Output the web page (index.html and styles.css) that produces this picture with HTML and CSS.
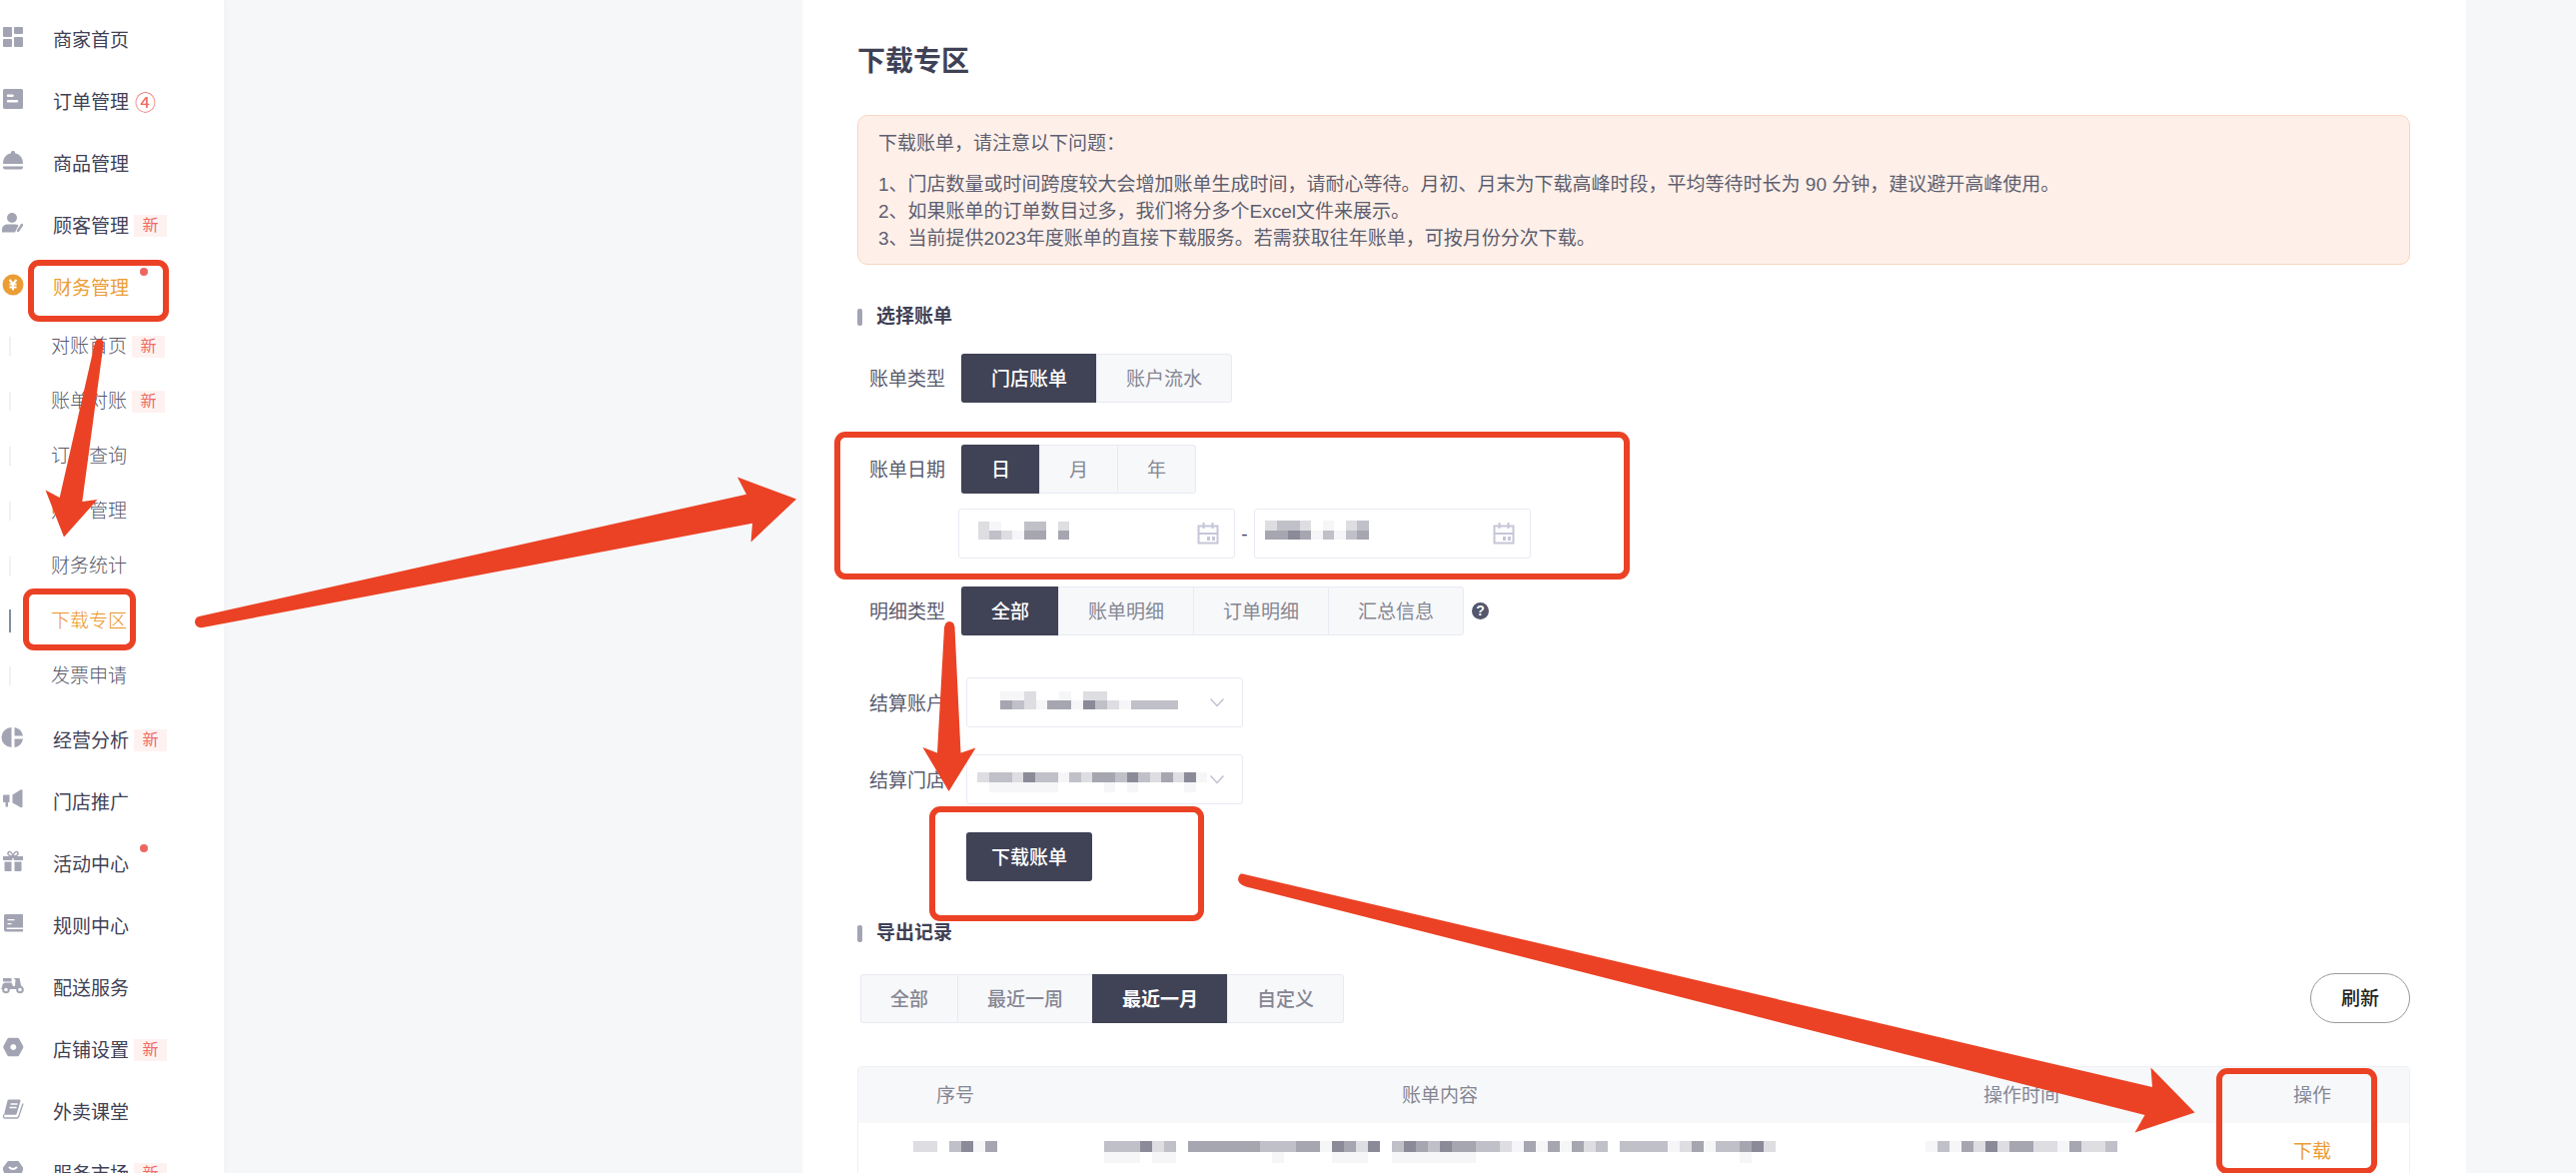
FILE: index.html
```html
<!DOCTYPE html>
<html lang="zh-CN">
<head>
<meta charset="utf-8">
<meta name="viewport" content="width=device-width, initial-scale=1">
<title>下载专区</title>
<link rel="stylesheet" href="styles.css">
</head>
<body>
<div class="app">
  <nav class="sidebar">
    <ul class="menu">
      <li><a href="#" class="menu-item"><svg class="icon" viewBox="0 0 20 20"><rect x="0" y="0" width="9" height="10" rx="1"/><rect x="11" y="0" width="9" height="7" rx="1"/><rect x="0" y="12" width="9" height="8" rx="1"/><rect x="11" y="10" width="9" height="10" rx="1"/></svg><span>商家首页</span></a></li>
      <li><a href="#" class="menu-item"><svg class="icon" viewBox="0 0 20 20"><path fill-rule="evenodd" d="M1.500 0h17A1.500 1.500 0 0 1 20 1.500v17a1.500 1.500 0 0 1-1.500 1.500h-17A1.500 1.500 0 0 1 0 18.500v-17A1.500 1.500 0 0 1 1.500 0zM5 5.500a1 1 0 0 0 0 2.500h4.500a1 1 0 0 0 0-2.500zM5 11a1 1 0 0 0 0 2.500h9a1 1 0 0 0 0-2.500z"/></svg><span>订单管理</span><span class="count">④</span></a></li>
      <li><a href="#" class="menu-item"><svg class="icon" viewBox="0 0 20 20"><path d="M8 2.200V1.500A1.500 1.500 0 0 1 9.500 0h1A1.500 1.500 0 0 1 12 1.500v.7A10 10 0 0 1 20 13H0A10 10 0 0 1 8 2.200z"/><path d="M0 15.500h20v1a2 2 0 0 1-2 2H2a2 2 0 0 1-2-2z"/></svg><span>商品管理</span></a></li>
      <li><a href="#" class="menu-item"><svg class="icon" viewBox="0 0 20 20"><circle cx="9" cy="5" r="5"/><path d="M-1 19.500v-2.500q0-5.500 6-5.500h7q2 0 3.500 1l-3.500 7z"/><path d="M19 12l-4 6" fill="none" stroke="#a3a4b3" stroke-width="2.400" stroke-linecap="round"/></svg><span>顾客管理</span><span class="tag">新</span></a></li>
      <li><a href="#" class="menu-item current"><svg class="icon" viewBox="0 0 20 20"><circle cx="10" cy="10" r="10.500"/><path d="M6.500 5l3.500 4 3.500-4M10 9v6.500M6.500 9.500h7M6.500 12.500h7" fill="none" stroke="#fff" stroke-width="1.900"/></svg><span>财务管理</span><i class="dot"></i></a>
        <ul class="submenu">
          <li><a href="#" class="sub-item"><span>对账首页</span><span class="tag">新</span></a></li>
          <li><a href="#" class="sub-item"><span>账单对账</span><span class="tag">新</span></a></li>
          <li><a href="#" class="sub-item"><span>订单查询</span></a></li>
          <li><a href="#" class="sub-item"><span>账户管理</span></a></li>
          <li><a href="#" class="sub-item"><span>财务统计</span></a></li>
          <li><a href="#" class="sub-item active"><span>下载专区</span></a></li>
          <li><a href="#" class="sub-item"><span>发票申请</span></a></li>
        </ul>
      </li>
      <li><a href="#" class="menu-item"><svg class="icon" viewBox="0 0 20 20"><path d="M8.500 0v20A10 10 0 0 1 8.500 0zM11.500 0A10 10 0 0 1 20 8.500h-8.500zM11.500 11.500H20A10 10 0 0 1 11.500 20z"/></svg><span>经营分析</span><span class="tag">新</span></a></li>
      <li><a href="#" class="menu-item"><svg class="icon" viewBox="0 0 20 20"><path d="M1 5.500h5.500V13H5v4.500H2.500V13H1q-1 0-1-1V6.500q0-1 1-1zM9.500 5.500L17.500.5q2-.8 2 .8v16q0 1.600-2 .7l-8-4.500z"/></svg><span>门店推广</span></a></li>
      <li><a href="#" class="menu-item"><svg class="icon" viewBox="0 0 20 20"><path d="M0 5h20v4H0zM1.500 10.500h7V20h-6q-1 0-1-1zM11.500 10.500h7V19q0 1-1 1h-6z"/><path d="M10 5Q4 4.500 5 1.500 7-1.500 10 4q3-5.500 5-2.500 1 3-5 3.500z" fill="none" stroke="#a3a4b3" stroke-width="1.500"/><path d="M9.300 7h1.400v13H9.300z" fill="#fff"/></svg><span>活动中心</span><i class="dot"></i></a></li>
      <li><a href="#" class="menu-item"><svg class="icon" viewBox="0 0 20 20"><path fill-rule="evenodd" d="M2.500 1H20v13.500H4q-1.200.8 0 1.500h16v2.500H3q-2 0-2-2v-14Q1 1 2.500 1zM4.500 6v1.300h7V6zM4.500 10v1.300h4V10z"/></svg><span>规则中心</span></a></li>
      <li><a href="#" class="menu-item"><svg class="icon" viewBox="0 0 20 20"><path d="M0 3h8.500v3.500H0zM-1 12q0-4.500 4-4.500h5.500l1.500 3.500h2l.5-6.500-2-1.500h6l1.500 7 2 4h-22z"/><circle cx="3" cy="14.500" r="2.800" fill="#fff" stroke="#a3a4b3" stroke-width="2"/><circle cx="17" cy="14.500" r="2.800" fill="#fff" stroke="#a3a4b3" stroke-width="2"/></svg><span>配送服务</span></a></li>
      <li><a href="#" class="menu-item"><svg class="icon" viewBox="0 0 20 20"><path fill-rule="evenodd" d="M6 .8h8.500q1 0 1.500.8l4.200 7.400q.4.900 0 1.800L16 18.400q-.5.800-1.500.8H6q-1 0-1.500-.8L.4 10.800q-.4-.9 0-1.800l4.100-7.400Q5 .8 6 .8zM10.300 7a3 3 0 1 0 .01 0z"/></svg><span>店铺设置</span><span class="tag">新</span></a></li>
      <li><a href="#" class="menu-item"><svg class="icon" viewBox="0 0 20 20"><path d="M6 .5h10.500q1.500 0 1 1.600L13.800 14.500q-.4 1.200-1.600 1.200H1L4.500 1.600Q4.900.5 6 .5z"/><path d="M1 15.500Q-.5 19 2 19h11.500q1.700 0 2.200-1.500L20 4.500" fill="none" stroke="#a3a4b3" stroke-width="1.300"/><path d="M7.500 5h7M6.500 8.500h7" stroke="#fff" stroke-width="1.300"/></svg><span>外卖课堂</span></a></li>
      <li><a href="#" class="menu-item"><svg class="icon" viewBox="0 0 20 20"><path d="M5 0h10.500L20 6.500V9l-4 10H4L0 9V6.500z"/><path d="M6 6q4 4 8 0" fill="none" stroke="#fff" stroke-width="1.800"/></svg><span>服务市场</span><span class="tag">新</span></a></li>
    </ul>
  </nav>

  <main class="panel">
    <h1>下载专区</h1>
    <div class="notice">
      <p>下载账单，请注意以下问题：</p>
      <ul>
        <li>1、门店数量或时间跨度较大会增加账单生成时间，请耐心等待。月初、月末为下载高峰时段，平均等待时长为 90 分钟，建议避开高峰使用。</li>
        <li>2、如果账单的订单数目过多，我们将分多个Excel文件来展示。</li>
        <li>3、当前提供2023年度账单的直接下载服务。若需获取往年账单，可按月份分次下载。</li>
      </ul>
    </div>

    <h2>选择账单</h2>
    <form class="filters">
      <div class="row">
        <span class="label" id="type-label">账单类型</span>
        <div class="segment" role="group" aria-labelledby="type-label">
          <button type="button" class="on">门店账单</button><button type="button">账户流水</button>
        </div>
      </div>
      <div class="row">
        <span class="label" id="date-label">账单日期</span>
        <div class="segment" role="group" aria-labelledby="date-label">
          <button type="button" class="on">日</button><button type="button">月</button><button type="button">年</button>
        </div>
      </div>
      <div class="row dates">
        <div class="field">
          <input type="text" aria-label="开始日期" readonly>
          <span class="masked masked-start" data-cells="21003302 23214404"></span>
          <svg class="calendar" viewBox="0 0 22 22"><path d="M1.500 3.500h19v17h-19zM1.500 11h19M6.500 0v6M15.500 0v6M9.500 3.500h3" /><path class="solid" d="M10 14h3v4h-3zM15 14h3v4h-3z"/></svg>
        </div>
        <span class="dash">-</span>
        <div class="field">
          <input type="text" aria-label="结束日期" readonly>
          <span class="masked masked-end" data-cells="233201023 445413134"></span>
          <svg class="calendar" viewBox="0 0 22 22"><path d="M1.500 3.500h19v17h-19zM1.500 11h19M6.500 0v6M15.500 0v6M9.500 3.500h3" /><path class="solid" d="M10 14h3v4h-3zM15 14h3v4h-3z"/></svg>
        </div>
      </div>
      <div class="row detail">
        <span class="label" id="detail-label">明细类型</span>
        <div class="segment" role="group" aria-labelledby="detail-label">
          <button type="button" class="on">全部</button><button type="button">账单明细</button><button type="button">订单明细</button><button type="button">汇总信息</button>
        </div>
        <button type="button" class="help" aria-label="说明">?</button>
      </div>
      <div class="row account">
        <label class="label" for="account">结算账户</label>
        <div class="field select">
          <select id="account"><option></option></select>
          <span class="masked masked-account" data-cells="112001022000000 432144153213333"></span>
          <svg class="chevron" viewBox="0 0 14 8"><path d="M.5.5l6.500 7 6.500-7"/></svg>
        </div>
      </div>
      <div class="row store">
        <label class="label" for="store">结算门店</label>
        <div class="field select">
          <select id="store"><option></option></select>
          <span class="masked masked-store" data-cells="23325331324435324251 01111110000101000010"></span>
          <svg class="chevron" viewBox="0 0 14 8"><path d="M.5.5l6.500 7 6.500-7"/></svg>
        </div>
      </div>
      <button type="button" class="primary">下载账单</button>
    </form>

    <h2 class="records-title">导出记录</h2>
    <div class="toolbar">
      <div class="segment strong" role="group" aria-label="导出时间">
        <button type="button">全部</button><button type="button">最近一周</button><button type="button" class="on">最近一月</button><button type="button">自定义</button>
      </div>
      <button type="button" class="refresh">刷新</button>
    </div>
    <table class="records">
      <thead>
        <tr><th class="narrow">序号</th><th class="wide">账单内容</th><th class="medium">操作时间</th><th class="narrow">操作</th></tr>
      </thead>
      <tbody>
        <tr>
          <td><span class="masked" data-cells="022035140 000000000"></span></td>
          <td><span class="masked" data-cells="33352304444443334415425035435443321414142303333124133452 11101100000000100001110011111110000000000000000000000100"></span></td>
          <td><span class="masked" data-cells="1314252442214223 0000000000000000"></span></td>
          <td><a href="#" class="download">下载</a></td>
        </tr>
      </tbody>
    </table>
  </main>

  <svg class="guide" viewBox="0 0 2578 1174" aria-hidden="true">
    <g class="frames">
      <rect x="31" y="263" width="135" height="56" rx="8"/>
      <rect x="26" y="592" width="107" height="56" rx="8"/>
      <rect x="838" y="435" width="790" height="142" rx="8"/>
      <rect x="933" y="810" width="269" height="109" rx="8"/>
      <rect x="2221" y="1072" width="155" height="100" rx="8"/>
    </g>
    <path d="M95 343Q96 339 100 339.500Q104 340 103.500 345L82.300 502L97.500 500L64 537.500L45.500 490.500L59.700 498z"/>
    <path d="M199 617L747 494.700L738 477.500L797 499.500L751.500 542.500L753 523.700L203 628Q196 629 195 623Q195 618 199 617z"/>
    <path d="M945 628Q946 622 950 622Q955 622 955.500 628L961.500 753.500L976.500 748.500L949.600 792L923.400 748L938 753.500z"/>
    <path d="M1243 874.500L2154 1088L2152.500 1068.500L2196.500 1113.500L2136.500 1133.500L2146.500 1116L1247 887.500Q1239 885 1239 880Q1240 874 1243 874.500z"/>
  </svg>
</div>
<script src="app.js"></script>
</body>
</html>
```
FILE: styles.css
```css
* { box-sizing: border-box; }

body {
  margin: 0;
  background: #f6f7f9;
  color: #3f4156;
  font-family: "Liberation Sans", "Noto Sans CJK SC", sans-serif;
  font-size: 19px;
  line-height: 27px;
}

h1, h2, p, ul { margin: 0; padding: 0; }
ul { list-style: none; }
a { color: inherit; text-decoration: none; }
button, input, select { font: inherit; margin: 0; }

.app {
  position: relative;
  display: flex;
  height: 100vh;
  overflow: hidden;
}

/* Sidebar */
.sidebar {
  flex: 0 0 224px;
  background: #fff;
  box-shadow: 0 0 8px rgba(63, 65, 86, 0.04);
}
.menu { padding-top: 9px; }
.menu-item {
  display: flex;
  align-items: center;
  height: 62px;
  padding-left: 3px;
  font-size: 19px;
}
.icon {
  width: 20px;
  height: 20px;
  margin: 0 30px 6px 0;
  overflow: visible;
  fill: #a3a4b3;
}
.current { color: #eb9d35; }
.current .icon { fill: #eb9d35; }
.count { margin-left: 6px; color: #ee6a63; font-size: 21px; }
.tag {
  width: 33px;
  margin-left: 5px;
  background: #fef2f1;
  color: #ee6a63;
  font-size: 16px;
  font-weight: 400;
  line-height: 22px;
  text-align: center;
}
.dot {
  width: 8px;
  height: 8px;
  margin: 0 0 32px 11px;
  border-radius: 50%;
  background: #ee6660;
}
.submenu { padding-bottom: 6px; }
.sub-item {
  display: flex;
  align-items: center;
  height: 55px;
  padding-left: 9px;
  color: #55576a;
  font-weight: 300;
}
.sub-item::before {
  content: "";
  width: 2px;
  height: 19px;
  margin-right: 40px;
  background: #f0f0f6;
}
.sub-item.active { color: #eb9425; }
.sub-item.active::before { height: 23px; background: #7f909c; }

/* Content panel */
.panel {
  flex: 1;
  min-width: 0;
  margin: 0 110px 0 579px;
  padding: 42px 56px 0 55px;
  background: #fff;
}
h1 { font-size: 28px; line-height: 40px; font-weight: 700; }
.notice {
  margin-top: 33px;
  padding: 14px 20px 12px;
  border: 1px solid #fad5bf;
  border-radius: 10px;
  background: #fef0e9;
  color: #5d5e70;
}
.notice ul { margin-top: 14px; }
h2 {
  display: flex;
  align-items: center;
  gap: 14px;
  margin-top: 38px;
  font-size: 19px;
  line-height: 28px;
  font-weight: 700;
}
h2::before {
  content: "";
  width: 5px;
  height: 17px;
  border-radius: 2px;
  background: #a3a4b3;
}

/* Filter form */
.filters { padding: 23px 0 0 12px; }
.row { display: flex; align-items: center; margin-bottom: 42px; }
.row:nth-child(2) { margin-bottom: 15px; }
.label { width: 92px; padding-top: 2px; color: #5a5b6e; }
.segment {
  display: flex;
  height: 49px;
}
.segment button {
  padding: 2px 29px 0;
  border: 1px solid #e9eaf2;
  border-right-width: 0;
  background: #f7f8fa;
  color: #858692;
}
.segment button:first-child { border-radius: 3px 0 0 3px; }
.segment button:last-child { border-right-width: 1px; border-radius: 0 3px 3px 0; }
.segment button.on { border-color: #404256; background: #404256; color: #fff; font-weight: 500; }
.segment.strong button { font-weight: 500; }
.segment.strong button.on { font-weight: 700; }

.row.dates { margin: 0 0 28px 89px; }
.dash { width: 19px; text-align: center; }
.field { position: relative; width: 277px; height: 50px; }
.field input, .field select {
  width: 100%;
  height: 100%;
  padding: 0 18px;
  border: 1px solid #e9eaf2;
  border-radius: 3px;
  background: #fff;
  appearance: none;
}
.select { margin-left: 5px; }
.row.account { margin-bottom: 27px; }
.row.store { margin-bottom: 28px; }
.calendar {
  position: absolute;
  top: 14px;
  right: 16px;
  width: 22px;
  height: 22px;
  fill: none;
  stroke: #c5c6d8;
  stroke-width: 2;
}
.calendar .solid { fill: #c5c6d8; stroke: none; }
.chevron {
  position: absolute;
  top: 21px;
  right: 19px;
  width: 14px;
  height: 8px;
  fill: none;
  stroke: #c0c1d3;
  stroke-width: 1.5;
  overflow: visible;
}
.help {
  width: 17px;
  height: 17px;
  margin-left: 8px;
  padding: 0;
  border: 0;
  border-radius: 50%;
  background: #54566b;
  color: #fff;
  font-size: 14px;
  font-weight: 700;
  line-height: 17px;
}
.primary {
  display: block;
  height: 49px;
  margin-left: 97px;
  padding: 2px 25px 0;
  border: 0;
  border-radius: 3px;
  background: #404256;
  color: #fff;
  font-weight: 500;
}

/* Export records */
.toolbar {
  display: flex;
  align-items: center;
  justify-content: space-between;
  margin: 26px 0 43px;
  padding-left: 3px;
}
.refresh {
  width: 100px;
  height: 50px;
  border: 1px solid #9a9a9e;
  border-radius: 25px;
  background: #fff;
  color: #222;
  font-weight: 500;
}
.records {
  width: 100%;
  border: 1px solid #eff0f4;
  border-radius: 4px;
  border-spacing: 0;
  table-layout: fixed;
  text-align: center;
}
.records th {
  height: 56px;
  padding: 0;
  background: #f7f8fa;
  color: #858692;
  font-weight: 400;
}
.records td { height: 56px; padding: 0; }
.narrow { width: 12.5%; }
.wide { width: 50%; }
.medium { width: 25%; }
.download { color: #eb9d35; }

/* Masked values */
.masked { display: inline-block; vertical-align: middle; line-height: 0; }
.masked svg { display: block; width: 100%; height: 100%; }
.field .masked { position: absolute; pointer-events: none; }
.masked-start { left: 20px; top: 13px; width: 91px; height: 18px; }
.masked-end { left: 11px; top: 12px; width: 104px; height: 19px; }
.masked-account { left: 34px; top: 14px; width: 178px; height: 18px; }
.masked-store { left: 11px; top: 18px; width: 230px; height: 20px; }
.level-1 { fill: #f6f6f8; }
.level-2 { fill: #dddde2; }
.level-3 { fill: #c0c0c8; }
.level-4 { fill: #a6a6b1; }
.level-5 { fill: #8a8a99; }

/* Walkthrough marks over the page */
.guide {
  position: absolute;
  left: 0;
  top: 0;
  width: 2578px;
  height: 1174px;
  fill: #eb4225;
  pointer-events: none;
}
.frames { fill: none; stroke: #eb4225; stroke-width: 6; }
```
FILE: app.js
```js
// Draws masked values as rows of grey cells; each digit is a darkness level.
const SVG_NS = "http://www.w3.org/2000/svg";
const CELL_WIDTH = 12;
const CELL_HEIGHT = 11;

document.querySelectorAll(".masked").forEach((holder) => {
  const rows = holder.dataset.cells.split(" ");
  const width = rows[0].length * CELL_WIDTH;
  const height = rows.length * CELL_HEIGHT;
  const svg = document.createElementNS(SVG_NS, "svg");
  svg.setAttribute("viewBox", `0 0 ${width} ${height}`);
  svg.setAttribute("width", width);
  svg.setAttribute("height", height);
  svg.setAttribute("preserveAspectRatio", "none");
  svg.setAttribute("shape-rendering", "crispEdges");
  rows.forEach((row, y) => {
    [...row].forEach((level, x) => {
      if (level === "0") return;
      const cell = document.createElementNS(SVG_NS, "rect");
      cell.setAttribute("x", x * CELL_WIDTH);
      cell.setAttribute("y", y * CELL_HEIGHT);
      cell.setAttribute("width", CELL_WIDTH);
      cell.setAttribute("height", CELL_HEIGHT);
      cell.setAttribute("class", `level-${level}`);
      svg.append(cell);
    });
  });
  holder.append(svg);
});
```
